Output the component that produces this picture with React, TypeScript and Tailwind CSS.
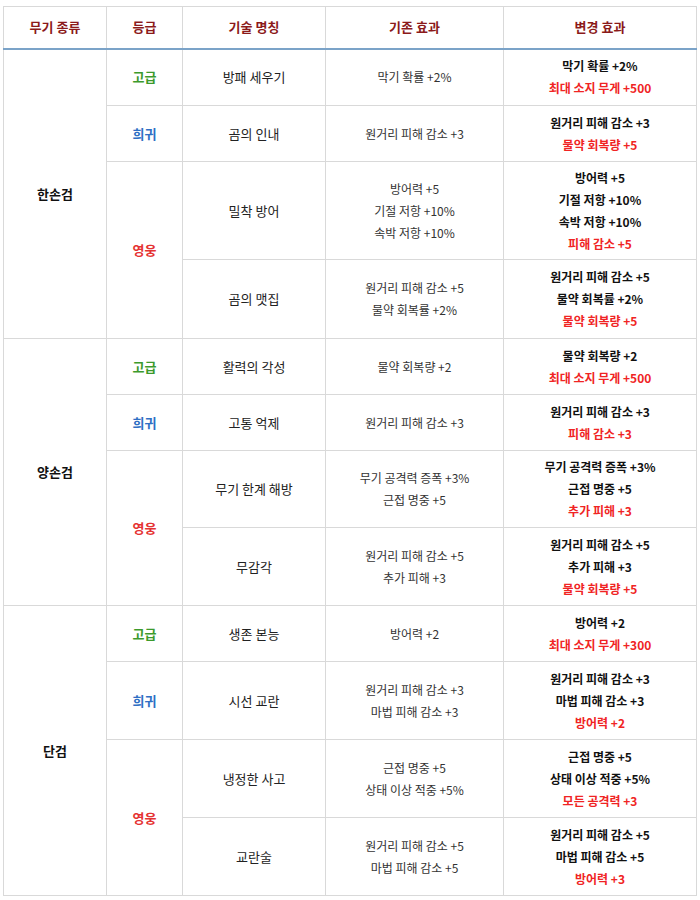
type Tier = "고급" | "희귀" | "영웅";

type Skill = {
  name: string;
  before: string[];
  after: string[];
  extra: string;
  h: number;
};

type Group = {
  tier: Tier;
  skills: Skill[];
};

type Weapon = {
  weapon: string;
  groups: Group[];
};

const tierColor: Record<Tier, string> = {
  고급: "text-[#3c9a2c]",
  희귀: "text-[#2f6fc4]",
  영웅: "text-[#e53232]",
};

const data: Weapon[] = [
  {
    weapon: "한손검",
    groups: [
      {
        tier: "고급",
        skills: [
          { name: "방패 세우기", before: ["막기 확률 +2%"], after: ["막기 확률 +2%"], extra: "최대 소지 무게 +500", h: 57 },
        ],
      },
      {
        tier: "희귀",
        skills: [
          { name: "곰의 인내", before: ["원거리 피해 감소 +3"], after: ["원거리 피해 감소 +3"], extra: "물약 회복량 +5", h: 56 },
        ],
      },
      {
        tier: "영웅",
        skills: [
          {
            name: "밀착 방어",
            before: ["방어력 +5", "기절 저항 +10%", "속박 저항 +10%"],
            after: ["방어력 +5", "기절 저항 +10%", "속박 저항 +10%"],
            extra: "피해 감소 +5",
            h: 98,
          },
          {
            name: "곰의 맷집",
            before: ["원거리 피해 감소 +5", "물약 회복률 +2%"],
            after: ["원거리 피해 감소 +5", "물약 회복률 +2%"],
            extra: "물약 회복량 +5",
            h: 79,
          },
        ],
      },
    ],
  },
  {
    weapon: "양손검",
    groups: [
      {
        tier: "고급",
        skills: [
          { name: "활력의 각성", before: ["물약 회복량 +2"], after: ["물약 회복량 +2"], extra: "최대 소지 무게 +500", h: 56 },
        ],
      },
      {
        tier: "희귀",
        skills: [
          { name: "고통 억제", before: ["원거리 피해 감소 +3"], after: ["원거리 피해 감소 +3"], extra: "피해 감소 +3", h: 56 },
        ],
      },
      {
        tier: "영웅",
        skills: [
          {
            name: "무기 한계 해방",
            before: ["무기 공격력 증폭 +3%", "근접 명중 +5"],
            after: ["무기 공격력 증폭 +3%", "근접 명중 +5"],
            extra: "추가 피해 +3",
            h: 77,
          },
          {
            name: "무감각",
            before: ["원거리 피해 감소 +5", "추가 피해 +3"],
            after: ["원거리 피해 감소 +5", "추가 피해 +3"],
            extra: "물약 회복량 +5",
            h: 78,
          },
        ],
      },
    ],
  },
  {
    weapon: "단검",
    groups: [
      {
        tier: "고급",
        skills: [
          { name: "생존 본능", before: ["방어력 +2"], after: ["방어력 +2"], extra: "최대 소지 무게 +300", h: 56 },
        ],
      },
      {
        tier: "희귀",
        skills: [
          {
            name: "시선 교란",
            before: ["원거리 피해 감소 +3", "마법 피해 감소 +3"],
            after: ["원거리 피해 감소 +3", "마법 피해 감소 +3"],
            extra: "방어력 +2",
            h: 78,
          },
        ],
      },
      {
        tier: "영웅",
        skills: [
          {
            name: "냉정한 사고",
            before: ["근접 명중 +5", "상태 이상 적중 +5%"],
            after: ["근접 명중 +5", "상태 이상 적중 +5%"],
            extra: "모든 공격력 +3",
            h: 78,
          },
          {
            name: "교란술",
            before: ["원거리 피해 감소 +5", "마법 피해 감소 +5"],
            after: ["원거리 피해 감소 +5", "마법 피해 감소 +5"],
            extra: "방어력 +3",
            h: 78,
          },
        ],
      },
    ],
  },
];

const cell = "border border-[#d9d9d9] text-center align-middle";

export default function App() {
  return (
    <div className="bg-white w-[700px] h-[900px] pt-[6px] pl-[3px] font-['Malgun_Gothic','Noto_Sans_CJK_KR',sans-serif] text-[12px] leading-[22px]">
      <table className="w-[693px] border-collapse table-fixed">
        <colgroup>
          <col className="w-[103px]" />
          <col className="w-[76px]" />
          <col className="w-[143px]" />
          <col className="w-[178px]" />
          <col className="w-[193px]" />
        </colgroup>
        <thead>
          <tr className="h-[42px]">
            {["무기 종류", "등급", "기술 명칭", "기존 효과", "변경 효과"].map((t) => (
              <th
                key={t}
                className={`${cell} border-b-2 border-b-[#7ba3c8] text-[13px] font-bold text-[#8b1a1a]`}
              >
                {t}
              </th>
            ))}
          </tr>
        </thead>
        <tbody>
          {data.map((w) => {
            const total = w.groups.reduce((n, g) => n + g.skills.length, 0);
            return w.groups.map((g, gi) =>
              g.skills.map((s, si) => (
                <tr key={s.name} style={{ height: s.h }}>
                  {gi === 0 && si === 0 && (
                    <td rowSpan={total} className={`${cell} font-bold text-[13px] text-[#111]`}>
                      {w.weapon}
                    </td>
                  )}
                  {si === 0 && (
                    <td rowSpan={g.skills.length} className={`${cell} font-bold text-[13px] ${tierColor[g.tier]}`}>
                      {g.tier}
                    </td>
                  )}
                  <td className={`${cell} text-[13px] text-[#222]`}>{s.name}</td>
                  <td className={`${cell} text-[#333]`}>
                    {s.before.map((l) => (
                      <div key={l}>{l}</div>
                    ))}
                  </td>
                  <td className={`${cell} font-bold`}>
                    {s.after.map((l) => (
                      <div key={l} className="text-[#111]">
                        {l}
                      </div>
                    ))}
                    <div className="text-[#f02424]">{s.extra}</div>
                  </td>
                </tr>
              ))
            );
          })}
        </tbody>
      </table>
    </div>
  );
}
